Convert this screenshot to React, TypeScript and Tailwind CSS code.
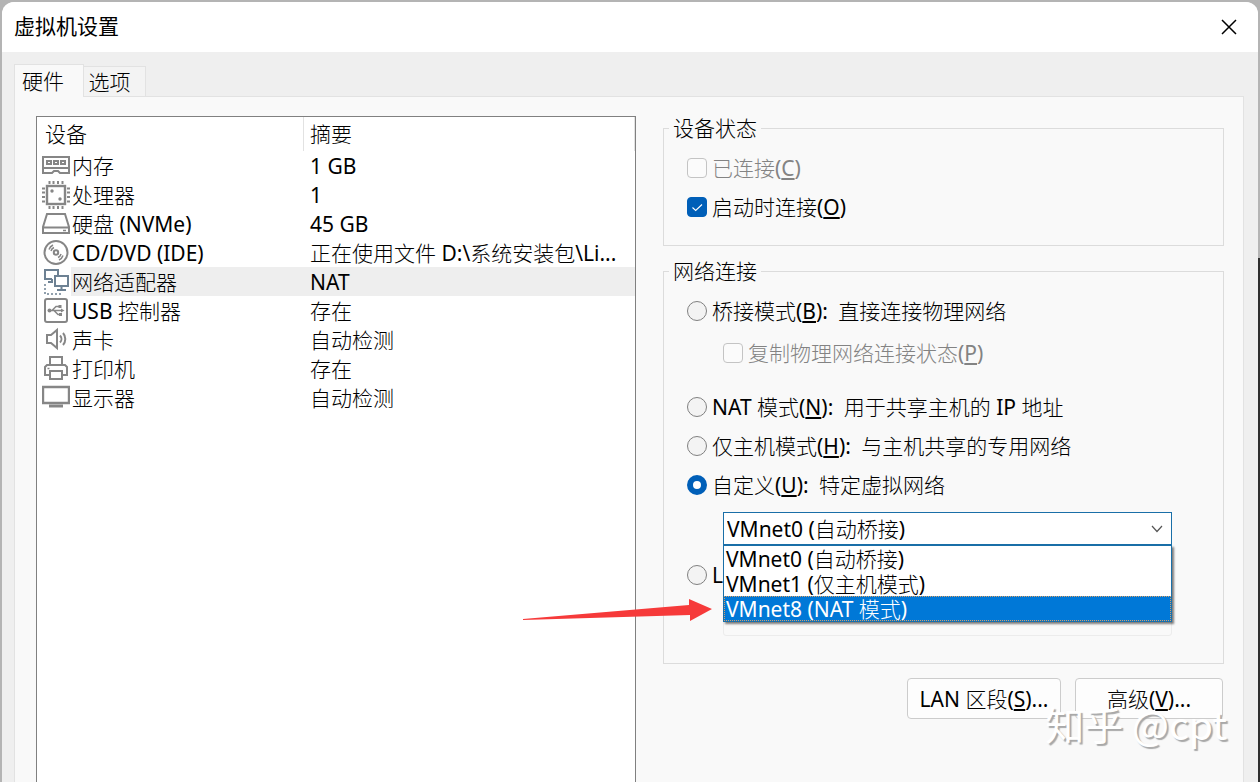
import React from "react";
import clsx from "clsx";

const MemoryIcon = () => (
  <svg width="28" height="28" viewBox="0 0 28 28" fill="none" stroke="#868686" strokeWidth="2">
    <path d="M1 5h26v16h-9l-2-2h-4l-2 2H1z M1 16h26" />
    <path d="M5 9h4v3H5z M12 9h4v3h-4z M19 9h4v3h-4z" strokeWidth="2" />
  </svg>
);

const CpuIcon = () => (
  <svg width="28" height="28" viewBox="0 0 28 28" fill="none" stroke="#868686" strokeWidth="2">
    <rect x="5" y="5" width="18" height="18" strokeWidth="2.400" />
    <path d="M7.5 0v3M11.5 0v3M16 0v3M20.5 0v3M7.5 25v3M11.5 25v3M16 25v3M20.5 25v3" />
    <path d="M0 7.5h3M0 11.5h3M0 16h3M0 20.5h3M25 7.5h3M25 11.5h3M25 16h3M25 20.5h3" />
    <circle cx="10" cy="10" r="1.7" fill="#868686" stroke="none" />
    <circle cx="18" cy="18" r="1.7" fill="#868686" stroke="none" />
  </svg>
);

const DiskIcon = () => (
  <svg width="28" height="28" viewBox="0 0 28 28" fill="none" stroke="#868686" strokeWidth="2">
    <path d="M5 4h18l4 13v6H1v-6z M1 17.5h26" />
    <path d="M21 20.5h3" strokeWidth="1.5" />
  </svg>
);

const DiscIcon = () => (
  <svg width="28" height="28" viewBox="0 0 28 28" fill="none" stroke="#868686" strokeWidth="2">
    <circle cx="14" cy="13.5" r="11.5" />
    <circle cx="14" cy="13.5" r="2.2" />
    <path d="M7 10.500a7.500 7.500 0 0 1 4-4.500M21 16.500a7.500 7.500 0 0 1-4 4.500M9 12a5.500 5.500 0 0 1 3-3.500M19 15a5.500 5.500 0 0 1-3 3.500" strokeWidth="1.5" />
  </svg>
);

const NetworkIcon = () => (
  <svg width="28" height="28" viewBox="0 0 28 28" fill="none" stroke="#6d8193" strokeWidth="2">
    <path d="M10 11H3V2h13v5M10 11v4M6 14h5" />
    <path d="M13 8h13v10H13z M19.5 18v4M15 22h9" />
    <path d="M3 16v10h16" strokeWidth="1.5" strokeDasharray="2 2" />
  </svg>
);

const UsbIcon = () => (
  <svg width="28" height="28" viewBox="0 0 28 28" fill="none" stroke="#868686" strokeWidth="2">
    <rect x="3" y="2" width="22" height="23" rx="2" />
    <path d="M7 13.5h13M10 13.5l4-4h3M12 13.5l4 4h2" strokeWidth="1.5" />
    <circle cx="7.5" cy="13.5" r="2" fill="#868686" stroke="none" />
    <path d="M19 11.5l3.5 2-3.5 2z M16.5 8h3v3h-3z M17 16h3v3h-3z" fill="#868686" stroke="none" />
  </svg>
);

const SoundIcon = () => (
  <svg width="28" height="28" viewBox="0 0 28 28" fill="none" stroke="#868686" strokeWidth="2">
    <path d="M5 9h4l6-5v18l-6-5H5z" />
    <path d="M18 9.500a5 5 0 0 1 0 7M21 7a9 9 0 0 1 0 12" />
  </svg>
);

const PrinterIcon = () => (
  <svg width="28" height="28" viewBox="0 0 28 28" fill="none" stroke="#868686" strokeWidth="2">
    <path d="M8 10V2h12v8" />
    <path d="M8 20H3v-8l2-2h18l2 2v8h-5" />
    <path d="M8 16h12v8H8z" />
    <path d="M5.5 13.5h2" strokeWidth="1.5" />
  </svg>
);

const DisplayIcon = () => (
  <svg width="28" height="28" viewBox="0 0 28 28" fill="none" stroke="#868686" strokeWidth="2">
    <path d="M1 3h26v16H1z" strokeWidth="2.400" />
    <path d="M7 22h14" strokeWidth="3" />
  </svg>
);

const devices = [
  { name: "内存", summary: "1 GB", icon: MemoryIcon },
  { name: "处理器", summary: "1", icon: CpuIcon },
  { name: "硬盘 (NVMe)", summary: "45 GB", icon: DiskIcon },
  { name: "CD/DVD (IDE)", summary: "正在使用文件 D:\\系统安装包\\Li...", icon: DiscIcon },
  { name: "网络适配器", summary: "NAT", icon: NetworkIcon, selected: true },
  { name: "USB 控制器", summary: "存在", icon: UsbIcon },
  { name: "声卡", summary: "自动检测", icon: SoundIcon },
  { name: "打印机", summary: "存在", icon: PrinterIcon },
  { name: "显示器", summary: "自动检测", icon: DisplayIcon },
];

const networks = ["VMnet0 (自动桥接)", "VMnet1 (仅主机模式)", "VMnet8 (NAT 模式)"];

interface OptionProps {
  id: string;
  text: string;
  hotkey?: string;
  after?: string;
  checked?: boolean;
  disabled?: boolean;
  className?: string;
}

const CheckOption: React.FC<OptionProps> = ({ id, text, hotkey, checked, disabled, className }) => (
  <div className={clsx("flex h-7 items-center gap-[5px]", className)}>
    <span className="relative flex h-5 w-5 shrink-0">
      <input
        id={id}
        type="checkbox"
        defaultChecked={checked}
        disabled={disabled}
        className="peer h-5 w-5 appearance-none rounded-[4px] border border-[#8a8a8a] bg-[#f7f7f7] checked:border-[#005fb8] checked:bg-[#005fb8] disabled:border-[#c4c4c4] disabled:bg-[#fbfbfb]"
      />
      <svg className="pointer-events-none absolute inset-0 hidden peer-checked:block" width="20" height="20" viewBox="0 0 20 20" fill="none" stroke="white" strokeWidth="1.1">
        <path d="M5.5 10.5l3.2 3L15 7.5" />
      </svg>
    </span>
    <label htmlFor={id} className={clsx("whitespace-nowrap", disabled && "text-[#838383]")}>
      {text}(<u className="underline-offset-2">{hotkey}</u>)
    </label>
  </div>
);

const RadioOption: React.FC<OptionProps> = ({ id, text, hotkey, after, checked, className }) => (
  <div className={clsx("flex h-7 items-center gap-[5px]", className)}>
    <input
      id={id}
      type="radio"
      name="network"
      defaultChecked={checked}
      className="h-5 w-5 shrink-0 appearance-none rounded-full border border-[#808080] bg-[#f3f3f3] checked:border-[6px] checked:border-[#005fb8] checked:bg-white"
    />
    <label htmlFor={id} className="whitespace-nowrap">
      {text}
      {hotkey && <>(<u className="underline-offset-2">{hotkey}</u>): <span className="ml-[5px]">{after}</span></>}
    </label>
  </div>
);

const DeviceTable = () => (
  <div className="border border-b-0 border-[#808080] bg-white">
    <table className="w-full table-fixed border-separate border-spacing-0 text-left">
      <thead>
        <tr className="h-[34px]">
          <th className="w-[267px] border-r border-[#e2e2e2] p-0 pl-2 font-normal">设备</th>
          <th className="border-r border-[#e2e2e2] p-0 pl-[6px] font-normal">摘要</th>
        </tr>
      </thead>
      <tbody>
        {devices.map(({ name, summary, icon: Icon, selected }) => (
          <tr key={name} className="h-[29px]">
            <td className="p-0">
              <div className="flex h-[29px] items-center pl-[5px]">
                <Icon />
                <span className={clsx("ml-px flex h-full flex-1 items-center whitespace-nowrap pl-px", selected && "bg-[#eeeeee]")}>{name}</span>
              </div>
            </td>
            <td className={clsx("truncate p-0 pl-[6px]", selected && "bg-[#eeeeee]")}>{summary}</td>
          </tr>
        ))}
      </tbody>
    </table>
  </div>
);

const NetworkSelect = () => (
  <div className="relative z-10 ml-9 mr-[51px] mt-[13px]">
    <select
      aria-label="特定虚拟网络"
      defaultValue={networks[0]}
      className="block h-[33px] w-full appearance-none border border-[#1a6fa8] bg-white px-[3px]"
    >
      {networks.map((n) => (
        <option key={n}>{n}</option>
      ))}
    </select>
    <svg className="pointer-events-none absolute right-[9px] top-[11px]" width="12" height="12" viewBox="0 0 12 12" fill="none" stroke="#555" strokeWidth="1.2">
      <path d="M1 3l5 5.5L11 3" />
    </svg>
    <ul role="listbox" aria-label="虚拟网络" className="absolute inset-x-0 top-full border border-[#1a6fa8] bg-white shadow-[2px_2px_2px_rgba(0,0,0,0.5)]">
      {networks.map((n, i) => (
        <li
          key={n}
          role="option"
          aria-selected={i === 2}
          className={clsx("flex h-[25px] items-center whitespace-nowrap pl-[2px]", i === 2 && "bg-[#0078d7] text-white outline-1 outline-dotted -outline-offset-1 outline-[#d9a066]")}
        >
          {n}
        </li>
      ))}
    </ul>
    <svg className="absolute right-full top-[86px] mr-[10px]" width="190" height="24" viewBox="0 0 190 24" fill="#f63a3a">
      <path d="M0 21L166 7V1l23 10L167 23v-6L0 22z" />
    </svg>
  </div>
);

const App: React.FC = () => {
  return (
    <div className="relative flex h-screen flex-col overflow-hidden bg-[#b4b4b4] px-[2px] pt-[2px] font-['Noto_Sans','Noto_Sans_CJK_SC_Light','Noto_Sans_CJK_SC',sans-serif] text-[21px] leading-6 text-black">
      <div className="absolute bottom-0 right-0 top-[258px] w-[2px] bg-[#2e2e2e]" />
      <div className="relative flex flex-1 flex-col overflow-hidden rounded-t-xl bg-[#efefef]">
        <header className="flex h-[50px] shrink-0 items-center justify-between bg-white pl-3 pr-5">
          <h1 className="pb-1 font-['Noto_Sans_CJK_SC',sans-serif] font-normal">虚拟机设置</h1>
          <button type="button" aria-label="关闭" className="p-px">
            <svg width="16" height="16" viewBox="0 0 16 16" stroke="black" strokeWidth="1.5">
              <path d="M1 1l14 14M15 1L1 15" />
            </svg>
          </button>
        </header>

        <main className="flex flex-1 flex-col pl-3 pr-[14px] pt-3">
          <div role="tablist" className="flex items-end">
            <button role="tab" aria-selected="true" className="z-10 -mb-px h-[33px] w-[70px] border border-b-0 border-[#e2e2e2] bg-[#f9f9f9] pr-3">
              硬件
            </button>
            <button role="tab" aria-selected="false" className="h-[30px] w-[62px] border border-b-0 border-l-0 border-[#e2e2e2] bg-[#f3f3f3] pr-[10px]">
              选项
            </button>
          </div>

          <div role="tabpanel" className="grid flex-1 grid-cols-[600fr_561fr] gap-[27px] border border-b-0 border-[#e2e2e2] bg-[#f9f9f9] pl-[21px] pr-[19px] pt-[19px]">
            <DeviceTable />

            <div>
              <fieldset className="border border-[#dcdcdc] pb-6 pl-[23px] pt-[14px]">
                <legend className="-ml-[18px] h-6 px-1">设备状态</legend>
                <CheckOption id="connected" text="已连接" hotkey="C" disabled />
                <CheckOption id="on-boot" text="启动时连接" hotkey="O" checked className="mt-[11px]" />
              </fieldset>

              <fieldset className="mt-[13px] border border-[#dcdcdc] pb-[27px] pl-[23px] pt-[14px]">
                <legend className="-ml-[18px] h-6 px-1">网络连接</legend>
                <RadioOption id="bridged" text="桥接模式" hotkey="B" after="直接连接物理网络" />
                <CheckOption id="replicate" text="复制物理网络连接状态" hotkey="P" disabled className="ml-9 mt-[14px]" />
                <RadioOption id="nat" text="NAT 模式" hotkey="N" after="用于共享主机的 IP 地址" className="mt-[26px]" />
                <RadioOption id="host-only" text="仅主机模式" hotkey="H" after="与主机共享的专用网络" className="mt-[11px]" />
                <RadioOption id="custom" text="自定义" hotkey="U" after="特定虚拟网络" checked className="mt-[11px]" />
                <NetworkSelect />
                <RadioOption id="lan" text="L" className="mt-4" />
                <div className="ml-9 mr-[51px] mt-[14px] h-[33px] rounded-[3px] border border-[#ececec]" />
              </fieldset>

              <div className="relative mr-px mt-[14px] flex justify-end gap-[14px]">
                <button type="button" className="h-[41px] w-[154px] rounded-[4px] border border-[#cccccc] bg-[#fdfdfd]">
                  LAN 区段(<u className="underline-offset-2">S</u>)...
                </button>
                <button type="button" className="h-[41px] w-[148px] rounded-[4px] border border-[#cccccc] bg-[#fdfdfd]">
                  高级(<u className="underline-offset-2">V</u>)...
                </button>
                <div className="pointer-events-none absolute -right-1 top-[18px] whitespace-nowrap font-['Noto_Sans_CJK_SC',sans-serif] text-[39px] leading-[54px] text-white [text-shadow:2px_2px_1px_#a8a8a8]">
                  知乎 @cpt
                </div>
              </div>
            </div>
          </div>
        </main>
      </div>
    </div>
  );
};

export default App;
